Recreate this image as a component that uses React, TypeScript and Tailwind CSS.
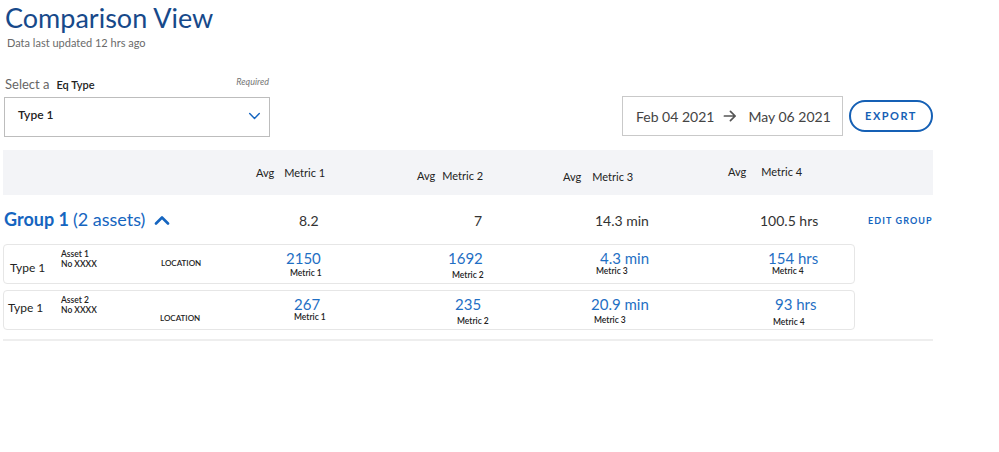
import React from "react";

const Chevron = ({ up = false, className = "" }: { up?: boolean; className?: string }) => (
  <svg viewBox="0 0 16 10" className={className} fill="none" stroke="currentColor" strokeWidth={up ? 2.6 : 1.8} strokeLinecap="round" strokeLinejoin="round">
    {up ? <path d="M2 8.5 L8 2.5 L14 8.5" /> : <path d="M2 2 L8 8 L14 2" />}
  </svg>
);

export default function App() {
  return (
    <div className="w-[999px] h-[452px] bg-white font-['Lato','Open_Sans',sans-serif] text-[#333] overflow-hidden">
      {/* Title */}
      <div className="pl-[5px] pt-[2px]">
        <div className="text-[27px] leading-[32px] text-[#17498a]">Comparison View</div>
        <div className="pl-[2px] mt-[2px] text-[11px] leading-[14px] text-[#6a6a6a]">Data last updated 12 hrs ago</div>
      </div>

      {/* Controls */}
      <div className="flex items-end mt-[25px]">
        <div className="ml-[4px] w-[266px]">
          <div className="flex items-baseline pl-[1px] pr-[1px] h-[18px]">
            <span className="text-[13px] text-[#666]">Select a</span>
            <span className="ml-[7px] text-[11px] font-semibold text-[#222]">Eq Type</span>
            <span className="ml-auto text-[9px] italic text-[#777] relative top-[-4px]">Required</span>
          </div>
          <div className="mt-[4px] h-[40px] border border-[#bdbdbd] flex items-start pl-[13px] pr-[8px] pt-[8px]">
            <span className="text-[12px] font-semibold text-[#222]">Type 1</span>
            <Chevron className="ml-auto mt-[6px] w-[13px] h-[8px] text-[#1565c0]" />
          </div>
        </div>
        <div className="ml-[352px] mb-[1px] w-[221px] h-[40px] border border-[#c9c9c9] flex items-center pl-[13px] text-[14px] text-[#444] whitespace-nowrap">
          <span>Feb 04 2021</span>
          <svg viewBox="0 0 16 14" className="ml-[9px] w-[14px] h-[12px] shrink-0" fill="none" stroke="#555" strokeWidth={2} strokeLinecap="round" strokeLinejoin="round">
            <path d="M1.5 7 H14 M8.5 1.5 L14 7 L8.5 12.5" />
          </svg>
          <span className="ml-[11px]">May 06 2021</span>
        </div>
        <div className="ml-[6px] mb-[5px] w-[84px] h-[32px] rounded-full border-2 border-[#1560b5] flex items-center justify-center text-[11px] font-bold tracking-[1.5px] text-[#1560b5]">
          EXPORT
        </div>
      </div>

      {/* Table */}
      <div className="ml-[3px] w-[930px] mt-[13px]">
        {/* Header band */}
        <div className="h-[45px] bg-[#f3f4f7] flex items-start text-[11px] leading-[14px] text-[#222]">
          <div className="w-[253px]" />
          <div className="w-[161px] pt-[16px] flex"><span>Avg</span><span className="ml-[10px]">Metric 1</span></div>
          <div className="w-[146px] pt-[19px] flex"><span>Avg</span><span className="ml-[7px]">Metric 2</span></div>
          <div className="w-[165px] pt-[20px] flex"><span>Avg</span><span className="ml-[11px]">Metric 3</span></div>
          <div className="pt-[15px] flex"><span>Avg</span><span className="ml-[15px]">Metric 4</span></div>
        </div>

        {/* Group row */}
        <div className="h-[49px] flex items-center whitespace-nowrap">
          <div className="w-[296px] pl-[1px] flex items-center text-[18px] text-[#1565c0]">
            <span className="font-bold">Group 1</span>
            <span className="ml-[4px]">(2 assets)</span>
            <Chevron up className="ml-[9px] w-[16px] h-[10px] text-[#1565c0]" />
          </div>
          <div className="w-[175px] text-[14px] text-[#333] mt-[2px]">8.2</div>
          <div className="w-[121px] text-[14px] text-[#333] mt-[2px]">7</div>
          <div className="w-[165px] text-[14px] text-[#333] mt-[2px]">14.3 min</div>
          <div className="w-[108px] text-[14px] text-[#333] mt-[2px]">100.5 hrs</div>
          <div className="text-[9px] font-bold tracking-[1.1px] text-[#1565c0] mt-[2px]">EDIT GROUP</div>
        </div>

        {/* Card 1 */}
        <div className="w-[852px] h-[40px] border border-[#e6e6e6] rounded-[4px] flex items-start">
          <div className="w-[57px] pl-[6px] pt-[15px] text-[12px] leading-[16px] text-[#222]">Type 1</div>
          <div className="w-[100px] pt-[4px] text-[8.5px] leading-[10px] text-[#222] font-semibold">
            <div>Asset 1</div>
            <div>No XXXX</div>
          </div>
          <div className="w-[125px] pt-[13px] text-[8px] leading-[10px] text-[#222] font-semibold">LOCATION</div>
          <div className="w-[162px] pt-[4px]">
            <div className="text-[15px] leading-[18px] text-[#1f6fc4]">2150</div>
            <div className="pl-[4px] mt-[1px] text-[8.5px] leading-[10px] font-semibold text-[#222]">Metric 1</div>
          </div>
          <div className="w-[148px] pt-[4px]">
            <div className="text-[15px] leading-[18px] text-[#1f6fc4]">1692</div>
            <div className="pl-[4px] mt-[3px] text-[8.5px] leading-[10px] font-semibold text-[#222]">Metric 2</div>
          </div>
          <div className="w-[172px] pt-[4px]">
            <div className="pl-[4px] text-[15px] leading-[18px] text-[#1f6fc4]">4.3 min</div>
            <div className="text-[8.5px] leading-[10px] font-semibold text-[#222] mt-[-1px]">Metric 3</div>
          </div>
          <div className="pt-[4px]">
            <div className="text-[15px] leading-[18px] text-[#1f6fc4]">154 hrs</div>
            <div className="pl-[4px] text-[8.5px] leading-[10px] font-semibold text-[#222] mt-[-1px]">Metric 4</div>
          </div>
        </div>

        {/* Card 2 */}
        <div className="mt-[6px] w-[852px] h-[40px] border border-[#e6e6e6] rounded-[4px] flex items-start">
          <div className="w-[57px] pl-[4px] pt-[9px] text-[12px] leading-[16px] text-[#222]">Type 1</div>
          <div className="w-[99px] pt-[4px] text-[8.5px] leading-[10px] text-[#222] font-semibold">
            <div>Asset 2</div>
            <div>No XXXX</div>
          </div>
          <div className="w-[134px] pt-[22px] text-[8px] leading-[10px] text-[#222] font-semibold">LOCATION</div>
          <div className="w-[161px] pt-[4px]">
            <div className="text-[15px] leading-[18px] text-[#1f6fc4]">267</div>
            <div className="mt-[-1px] text-[8.5px] leading-[10px] font-semibold text-[#222]">Metric 1</div>
          </div>
          <div className="w-[136px] pt-[4px]">
            <div className="text-[15px] leading-[18px] text-[#1f6fc4]">235</div>
            <div className="pl-[2px] mt-[3px] text-[8.5px] leading-[10px] font-semibold text-[#222]">Metric 2</div>
          </div>
          <div className="w-[182px] pt-[4px]">
            <div className="text-[15px] leading-[18px] text-[#1f6fc4]">20.9 min</div>
            <div className="pl-[3px] mt-[2px] text-[8.5px] leading-[10px] font-semibold text-[#222]">Metric 3</div>
          </div>
          <div className="pt-[4px]">
            <div className="pl-[2px] text-[15px] leading-[18px] text-[#1f6fc4]">93 hrs</div>
            <div className="mt-[4px] text-[8.5px] leading-[10px] font-semibold text-[#222]">Metric 4</div>
          </div>
        </div>

        <div className="mt-[9px] h-[2px] bg-[#eeeeee]" />
      </div>
    </div>
  );
}
